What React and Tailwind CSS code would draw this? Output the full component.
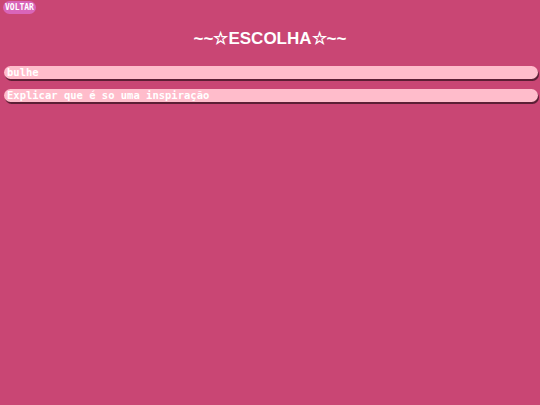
export default function App() {
  return (
    <div className="min-h-[405px] w-full bg-[#c94674] font-['DejaVu_Sans_Mono',monospace]">
      <div className="flex px-[3px] pt-[1px]">
        <button className="h-[13px] rounded-full bg-[#d965b9] px-[2px] text-[8px] font-bold leading-[13px] text-white">
          VOLTAR
        </button>
      </div>
      <h1 className="mt-[15px] text-center font-['Liberation_Sans',sans-serif] text-[17px] font-bold leading-[20px] text-white">
        ~~☆ESCOLHA☆~~
      </h1>
      <div className="mt-[17px] flex flex-col gap-[10px] pl-[4px] pr-[2px]">
        <button className="h-[13px] w-full rounded-full bg-[#ffbccb] px-[3px] text-left text-[10.5px] font-bold leading-[13px] text-white shadow-[1px_2px_0_#5c1f35]">
          bulhe
        </button>
        <button className="h-[13px] w-full rounded-full bg-[#ffbccb] px-[3px] text-left text-[10.5px] font-bold leading-[13px] text-white shadow-[1px_2px_0_#5c1f35]">
          Explicar que é so uma inspiração
        </button>
      </div>
    </div>
  );
}
